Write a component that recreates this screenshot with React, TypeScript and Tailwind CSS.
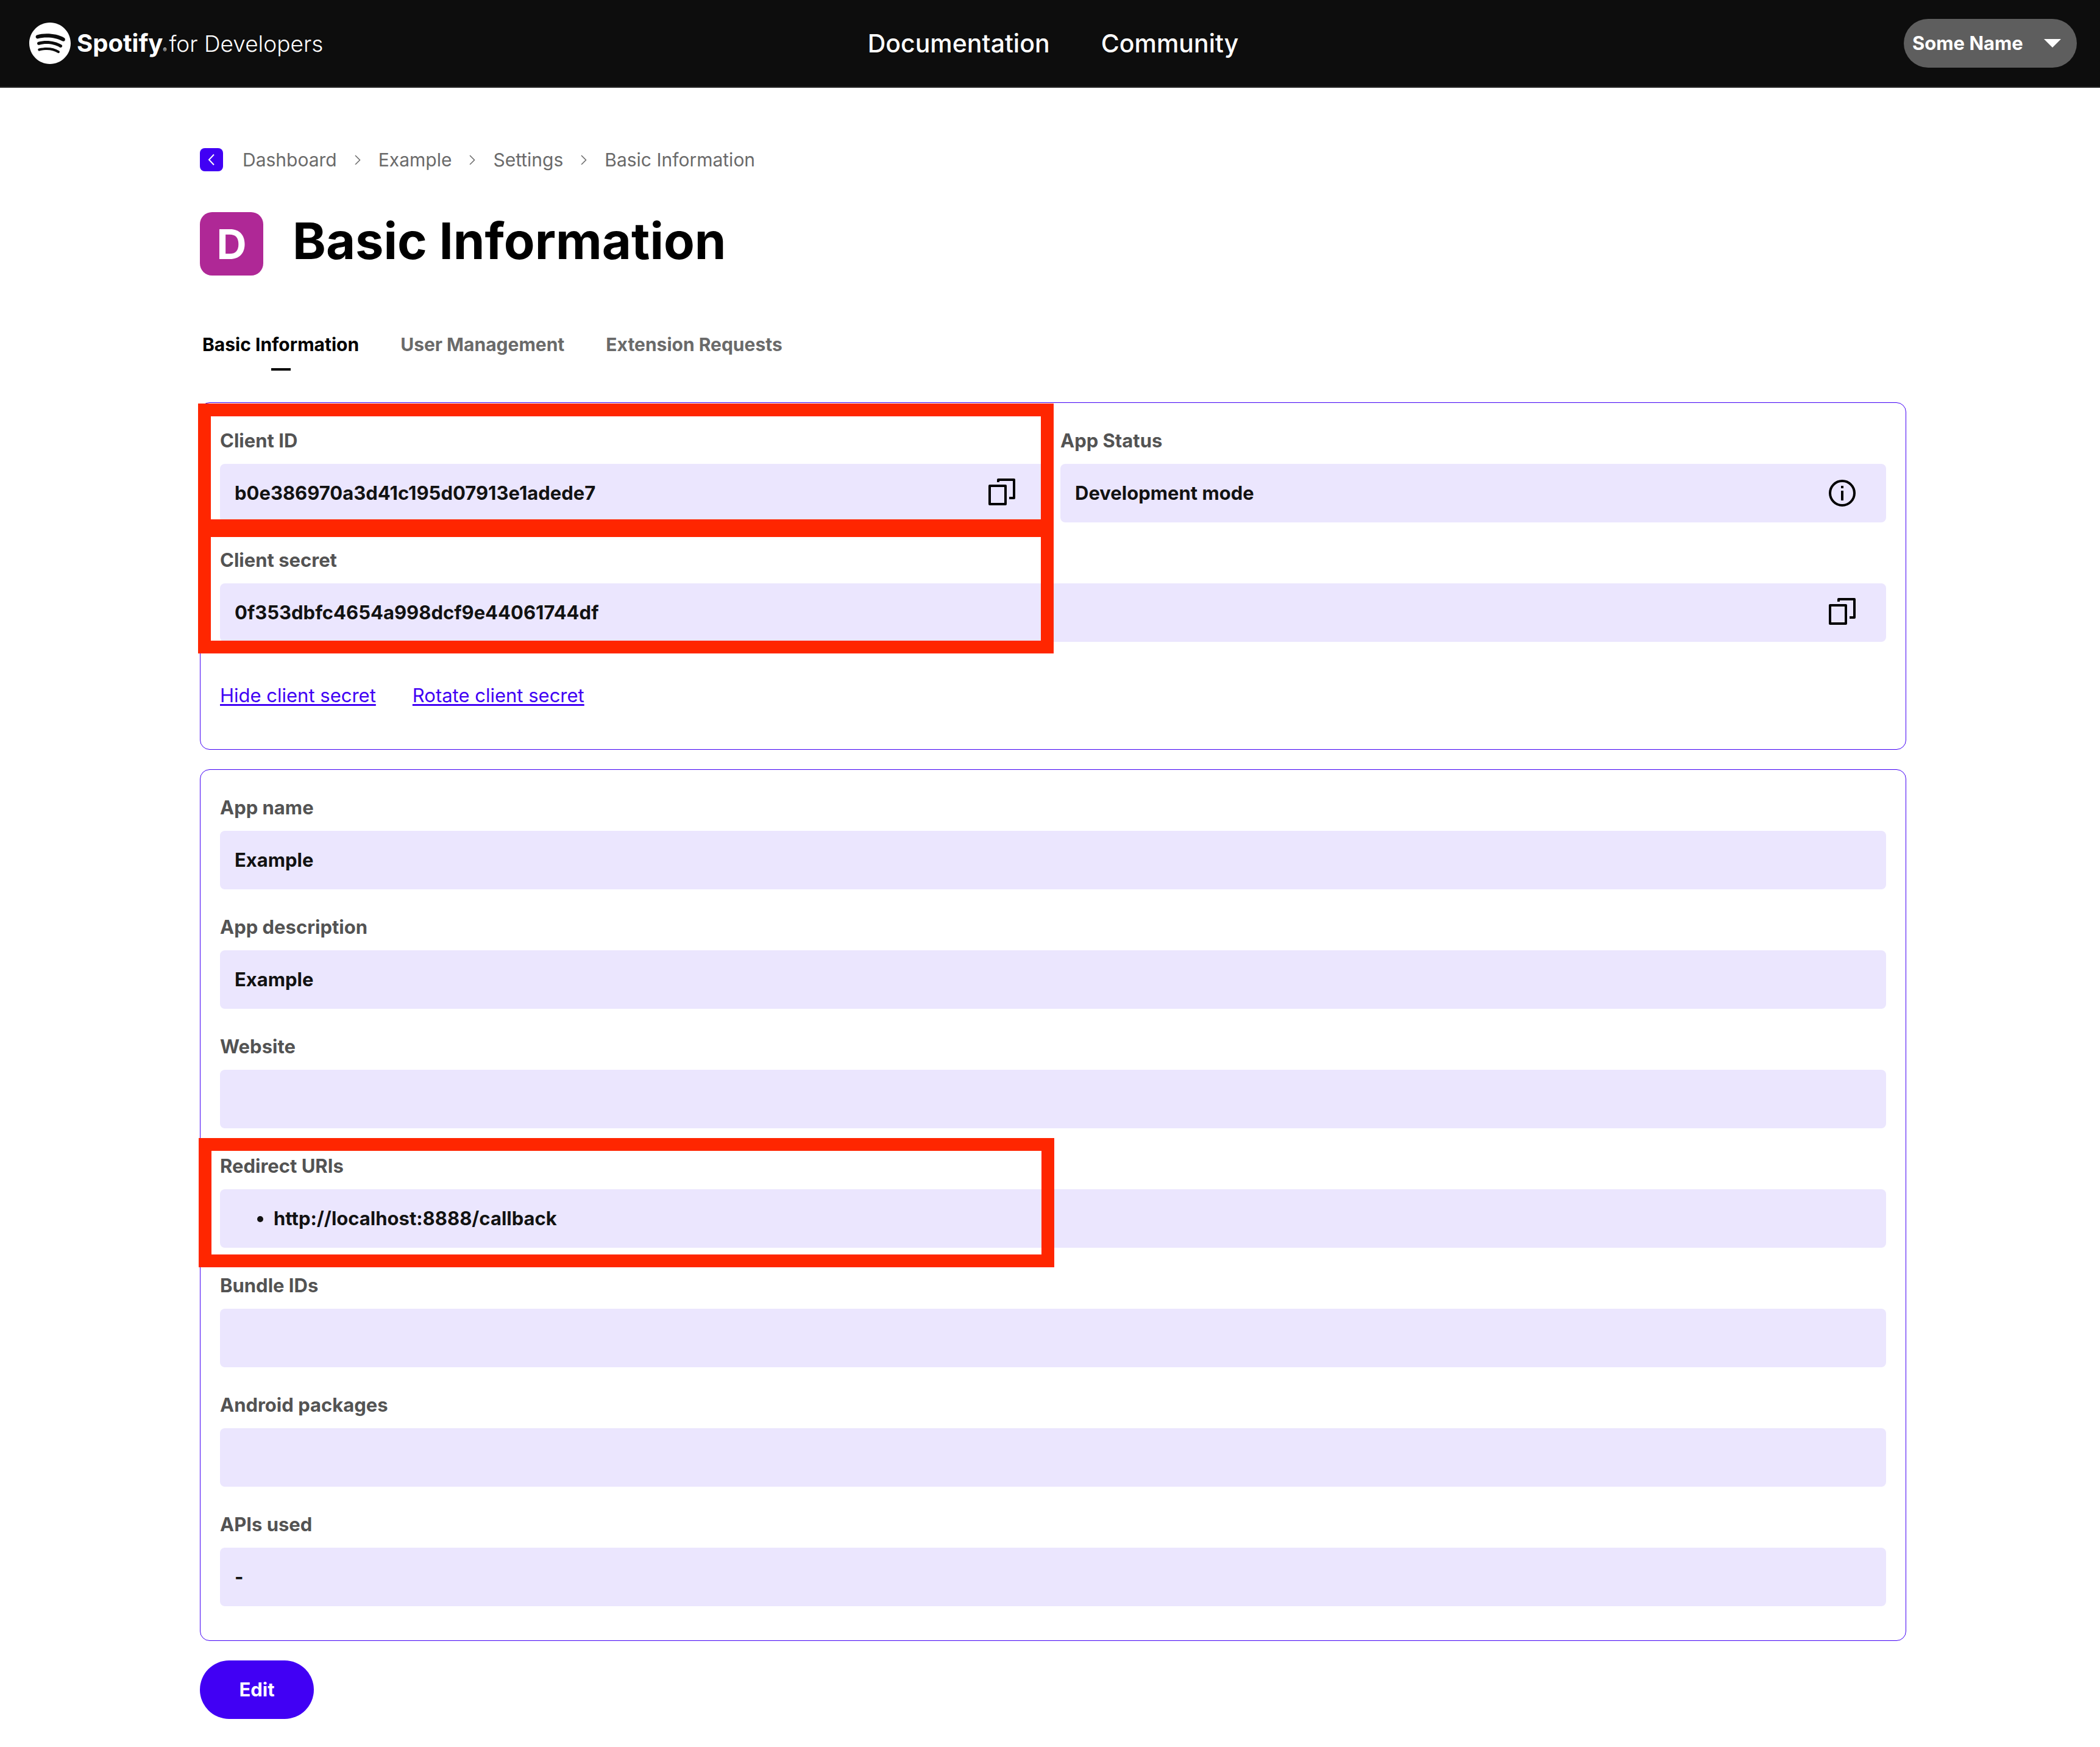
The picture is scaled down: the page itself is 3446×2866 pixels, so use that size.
import type { ReactNode } from "react";
import { SiSpotify } from "react-icons/si";

const crumbs = ["Dashboard", "Example", "Settings", "Basic Information"];
const tabs = ["Basic Information", "User Management", "Extension Requests"];

function CopyIcon() {
  return (
    <svg className="block size-12" viewBox="0 0 24 24" fill="none" stroke="currentColor" strokeWidth="2" strokeLinejoin="round" aria-hidden="true">
      <path d="M2 6h13v15H2z" />
      <path d="M9 3V1h13v15h-4" />
    </svg>
  );
}

function InfoIcon() {
  return (
    <svg className="block size-12" viewBox="0 0 24 24" fill="none" stroke="currentColor" strokeWidth="2" aria-hidden="true">
      <circle cx="12" cy="12" r="10" />
      <path d="M12 6v2M12 10v8" />
    </svg>
  );
}

function CrumbChevron() {
  return (
    <svg className="block h-4 w-3" viewBox="0 0 12 16" fill="none" stroke="currentColor" strokeWidth="1.5" aria-hidden="true">
      <path d="M2 1l7.500 7.500L2 16" />
    </svg>
  );
}

function Highlight({ className }: { className: string }) {
  return <span aria-hidden="true" className={`pointer-events-none absolute z-10 border-[21px] border-[#ff2600] ${className}`} />;
}

type FieldProps = { label: string; children?: ReactNode; action?: ReactNode; highlight?: string };

function Field({ label, children, action, highlight }: FieldProps) {
  return (
    <div className="relative mb-8">
      <dt className="mb-2 text-[31px] leading-[60px] font-bold text-[#535353]">{label}</dt>
      <dd className="flex h-24 items-center justify-between rounded-lg bg-[#ebe6fe] pr-12 pl-6 text-[31px] leading-[48px] font-bold text-[#121212]">
        <div>{children}</div>
        {action}
      </dd>
      {highlight && <Highlight className={highlight} />}
    </div>
  );
}

function IconButton({ label, children }: { label: string; children: ReactNode }) {
  return (
    <button type="button" aria-label={label} className="cursor-pointer text-black">
      {children}
    </button>
  );
}

function Card({ children }: { children: ReactNode }) {
  return <section className="mb-8 rounded-2xl border border-[#4100f4] px-8 pt-8 pb-6">{children}</section>;
}

function Header() {
  return (
    <header className="grid h-36 grid-cols-[1fr_auto_1fr] items-center border-b-2 border-[#282828] bg-[#0d0d0d] pr-[38px] pl-12 text-white">
      <a href="#home" className="flex items-center gap-2.5 justify-self-start whitespace-nowrap">
        <SiSpotify className="size-[68px]" aria-hidden="true" />
        <span className="flex items-baseline">
          <span className="text-[40px] leading-[48px] font-bold">Spotify</span>
          <span className="text-[9px] leading-3">®</span>
          <span className="pl-1 text-[37px] leading-[48px] font-light">for Developers</span>
        </span>
      </a>
      <nav aria-label="Main" className="flex gap-[84px] text-[41px] leading-[48px] font-medium">
        <a href="#documentation">Documentation</a>
        <a href="#community">Community</a>
      </nav>
      <button type="button" className="flex h-20 min-w-[284px] cursor-pointer items-center justify-between justify-self-end rounded-full bg-[#5e5e5e] pr-[26px] pl-3.5 text-[31px] leading-[48px] font-bold">
        Some Name
        <svg className="h-3.5 w-7" viewBox="0 0 28 14" fill="currentColor" aria-hidden="true">
          <path d="M0 0h28L14 14z" />
        </svg>
      </button>
    </header>
  );
}

export default function App() {
  return (
    <div className="min-h-screen bg-white font-['Inter',sans-serif] text-black">
      <Header />
      <main className="pt-[94px] pb-[46px] pl-2.5">
        <div className="mx-auto max-w-[2800px]">
          <nav aria-label="Breadcrumb" className="flex items-center gap-8 text-[30px] leading-[48px] text-[#6a6a6a]">
            <a href="#back" aria-label="Back" className="flex size-[38px] items-center justify-center rounded-lg bg-[#4100f4] text-white">
              <svg className="h-5 w-3" viewBox="0 0 12 20" fill="none" stroke="currentColor" strokeWidth="2" aria-hidden="true">
                <path d="M10 1.500L2 10l8 8.500" />
              </svg>
            </a>
            <ol className="flex items-center gap-7">
              {crumbs.map((crumb, i) => (
                <li key={crumb} className="flex items-center gap-7">
                  {i > 0 && <CrumbChevron />}
                  <a href="#crumb">{crumb}</a>
                </li>
              ))}
            </ol>
          </nav>

          <div className="mt-[62px] flex items-start gap-12">
            <div className="flex size-[104px] items-center justify-center rounded-[20px] bg-[#af2896] text-[68px] leading-[80px] font-bold text-white">D</div>
            <h1 className="text-[83px] leading-[94px] font-bold">Basic Information</h1>
          </div>

          <nav aria-label="Sections" className="mt-[89px] flex gap-[68px] pl-1 text-[30px] leading-[48px] font-bold">
            {tabs.map((tab, i) => (
              <a key={tab} href="#tab" aria-current={i === 0 ? "page" : undefined} className={i === 0 ? "text-black" : "text-[#6a6a6a]"}>
                {tab}
                <span className={i === 0 ? "mx-auto mt-[15px] block h-1 w-8 bg-black" : "hidden"} />
              </a>
            ))}
          </nav>

          <div className="mt-[52px]">
            <Card>
              <dl>
                <div className="grid grid-cols-2 gap-6">
                  <Field
                    label="Client ID"
                    action={<IconButton label="Copy client ID"><CopyIcon /></IconButton>}
                    highlight="-top-[31px] -right-[13px] -bottom-4 -left-9"
                  >
                    b0e386970a3d41c195d07913e1adede7
                  </Field>
                  <Field label="App Status" action={<IconButton label="About app status"><InfoIcon /></IconButton>}>
                    Development mode
                  </Field>
                </div>
                <Field
                  label="Client secret"
                  action={<IconButton label="Copy client secret"><CopyIcon /></IconButton>}
                  highlight="-top-[29px] right-[calc(50%-1px)] -bottom-[19px] -left-9"
                >
                  0f353dbfc4654a998dcf9e44061744df
                </Field>
              </dl>
              <div className="flex gap-[60px] pt-8 pb-10 text-[31px] leading-[48px] text-[#4100f4]">
                <button type="button" className="cursor-pointer underline decoration-[3px] underline-offset-[3px]">Hide client secret</button>
                <button type="button" className="cursor-pointer underline decoration-[3px] underline-offset-[3px]">Rotate client secret</button>
              </div>
            </Card>

            <Card>
              <dl>
                <Field label="App name">Example</Field>
                <Field label="App description">Example</Field>
                <Field label="Website" />
                <Field label="Redirect URIs" highlight="-top-4 right-[calc(50%-2px)] -bottom-8 -left-[35px]">
                  <ul className="list-disc pl-16">
                    <li>http://localhost:8888/callback</li>
                  </ul>
                </Field>
                <Field label="Bundle IDs" />
                <Field label="Android packages" />
                <Field label="APIs used">-</Field>
              </dl>
            </Card>

            <button type="button" className="h-24 min-w-[187px] cursor-pointer rounded-full bg-[#4100f4] px-16 text-[31px] leading-[48px] font-bold text-white">Edit</button>
          </div>
        </div>
      </main>
    </div>
  );
}
